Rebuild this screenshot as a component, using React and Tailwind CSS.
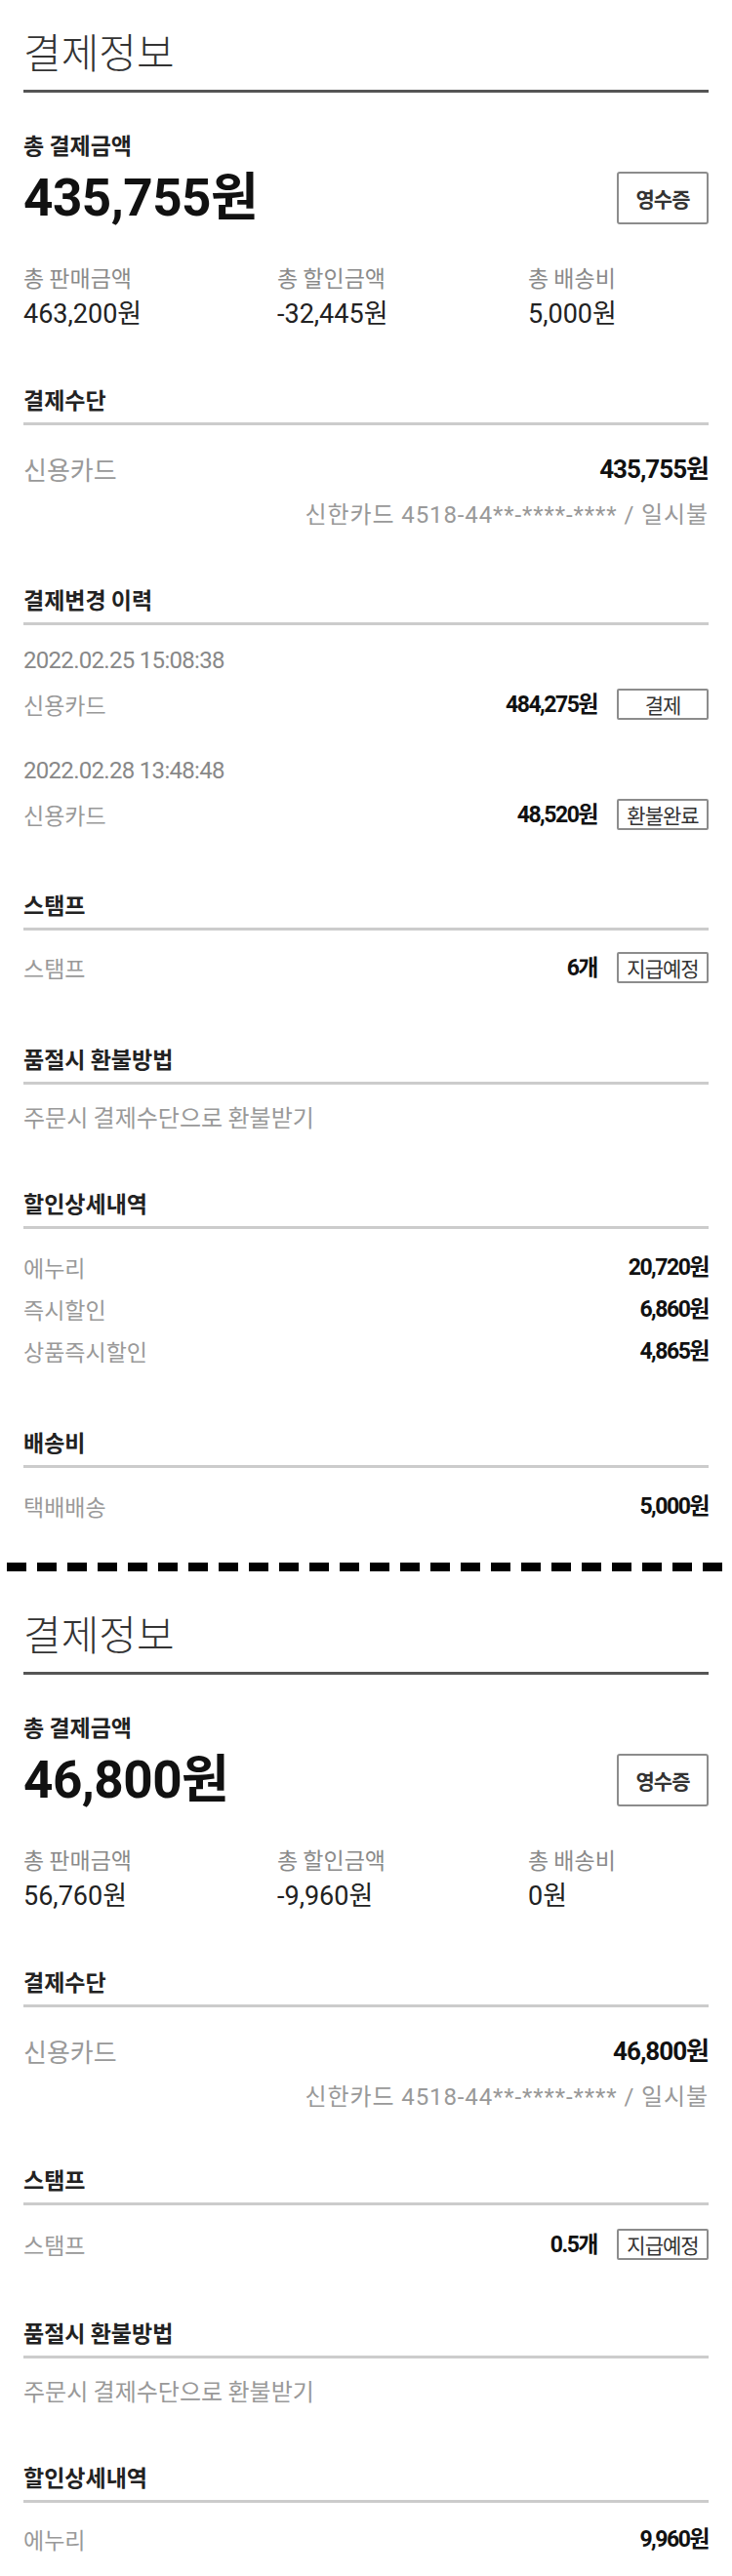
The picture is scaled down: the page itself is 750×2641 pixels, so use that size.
const NUM = "font-[family-name:Roboto,'Noto_Sans_CJK_KR',sans-serif]";

const Btn = ({ children }) => (
	<span className="flex h-[32px] w-[94px] items-center justify-center rounded-[2px] border-2 border-[#8c8c8c] text-[21px] leading-none tracking-[-1px] text-[#333]">
		{children}
	</span>
);

const Heading = ({ className, children }) => (
	<div className={className}>
		<div className="border-b-[3px] border-[#cccccc] pb-[12px]">
			<h3 className="text-[23px] font-bold leading-[23px] text-[#222]">{children}</h3>
		</div>
	</div>
);

const Row = ({ label, value }) => (
	<div className="flex h-[43px] items-center justify-between">
		<span className="text-[23px] leading-[23px] text-[#999]">{label}</span>
		<span className={`${NUM} text-[23px] font-bold leading-[23px] tracking-[-1.5px] text-[#111]`}>{value}</span>
	</div>
);

const Receipt = ({ data }) => (
	<div className="px-6 pt-[31px]">
		<div className="border-b-[3px] border-[#555] pb-[19px]">
			<h2 className="text-[42px] font-light leading-[42px] text-[#333]">결제정보</h2>
		</div>

		<p className="mt-[42px] text-[23px] font-bold leading-[23px] text-[#222]">총 결제금액</p>
		<div className="mt-[16px] flex items-center justify-between">
			<span className={`${NUM} text-[53px] font-bold leading-[52px] tracking-[-0.5px] text-[#111]`}>{data.total}</span>
			<button className="flex h-[54px] w-[94px] items-center justify-center rounded-[3px] border-2 border-[#8c8c8c] text-[21px] font-bold leading-none tracking-[-1px] text-[#333]">
				영수증
			</button>
		</div>

		<div className="mt-[42px] grid grid-cols-[260px_257px_1fr]">
			{data.summary.map((s) => (
				<div key={s.label}>
					<p className="text-[23px] leading-[24px] text-[#8a8a8a]">{s.label}</p>
					<p className={`${NUM} mt-[13px] text-[27px] leading-[26px] text-[#222]`}>{s.value}</p>
				</div>
			))}
		</div>

		<Heading className="mt-[63px]">결제수단</Heading>
		<div className="mt-[32px] flex h-[26px] items-center justify-between">
			<span className="text-[26px] leading-[26px] text-[#999]">신용카드</span>
			<span className={`${NUM} text-[26px] font-bold leading-[26px] tracking-[-1px] text-[#111]`}>{data.total}</span>
		</div>
		<p className={`${NUM} mt-[22px] text-right text-[24px] leading-[24px] tracking-[0.9px] text-[#999]`}>
			신한카드 4518-44**-****-**** / 일시불
		</p>

		{data.history && (
			<>
				<Heading className="mt-[63px]">결제변경 이력</Heading>
				{data.history.map((h, i) => (
					<div key={h.date} className={i === 0 ? "mt-[24px]" : "mt-[40px]"}>
						<p className={`${NUM} text-[24px] leading-[25px] tracking-[-0.7px] text-[#888]`}>{h.date}</p>
						<div className="mt-[16px] flex h-[32px] items-center justify-between">
							<span className="text-[23px] leading-[23px] text-[#999]">신용카드</span>
							<div className="flex items-center gap-[20px]">
								<span className={`${NUM} text-[23px] font-bold leading-[23px] tracking-[-1.5px] text-[#111]`}>{h.amount}</span>
								<Btn>{h.status}</Btn>
							</div>
						</div>
					</div>
				))}
			</>
		)}

		<Heading className={data.history ? "mt-[65px]" : "mt-[61px]"}>스탬프</Heading>
		<div className={`${data.history ? "mt-[22px]" : "mt-[24px]"} flex h-[32px] items-center justify-between`}>
			<span className="text-[23px] leading-[23px] text-[#999]">스탬프</span>
			<div className="flex items-center gap-[20px]">
				<span className={`${NUM} text-[23px] font-bold leading-[23px] tracking-[-1.5px] text-[#111]`}>{data.stamp}</span>
				<Btn>지급예정</Btn>
			</div>
		</div>

		<Heading className={data.history ? "mt-[66px]" : "mt-[63px]"}>품절시 환불방법</Heading>
		<p className="mt-[21px] text-[24px] leading-[24px] text-[#999]">주문시 결제수단으로 환불받기</p>

		<Heading className="mt-[65px]">할인상세내역</Heading>
		<div className={data.shipping ? "mt-[18px]" : "mt-[16px] pb-[15px]"}>
			{data.discounts.map((d) => (
				<Row key={d.label} label={d.label} value={d.value} />
			))}
		</div>

		{data.shipping && (
			<div className="pb-[36px]">
				<Heading className="mt-[60px]">배송비</Heading>
				<div className="mt-[18px]">
					<Row label="택배배송" value={data.shipping} />
				</div>
			</div>
		)}
	</div>
);

const first = {
	total: "435,755원",
	summary: [
		{ label: "총 판매금액", value: "463,200원" },
		{ label: "총 할인금액", value: "-32,445원" },
		{ label: "총 배송비", value: "5,000원" },
	],
	history: [
		{ date: "2022.02.25 15:08:38", amount: "484,275원", status: "결제" },
		{ date: "2022.02.28 13:48:48", amount: "48,520원", status: "환불완료" },
	],
	stamp: "6개",
	discounts: [
		{ label: "에누리", value: "20,720원" },
		{ label: "즉시할인", value: "6,860원" },
		{ label: "상품즉시할인", value: "4,865원" },
	],
	shipping: "5,000원",
};

const second = {
	total: "46,800원",
	summary: [
		{ label: "총 판매금액", value: "56,760원" },
		{ label: "총 할인금액", value: "-9,960원" },
		{ label: "총 배송비", value: "0원" },
	],
	stamp: "0.5개",
	discounts: [{ label: "에누리", value: "9,960원" }],
};

export default function App() {
	return (
		<div className="w-[750px] bg-white font-[family-name:'Noto_Sans_CJK_KR',sans-serif]">
			<Receipt data={first} />
			<div className="pb-[11px]">
				<svg width="750" height="9" className="block">
					<line x1="7" y1="4.5" x2="750" y2="4.5" stroke="#000" strokeWidth="9" strokeDasharray="20 11" />
				</svg>
			</div>
			<Receipt data={second} />
		</div>
	);
}
